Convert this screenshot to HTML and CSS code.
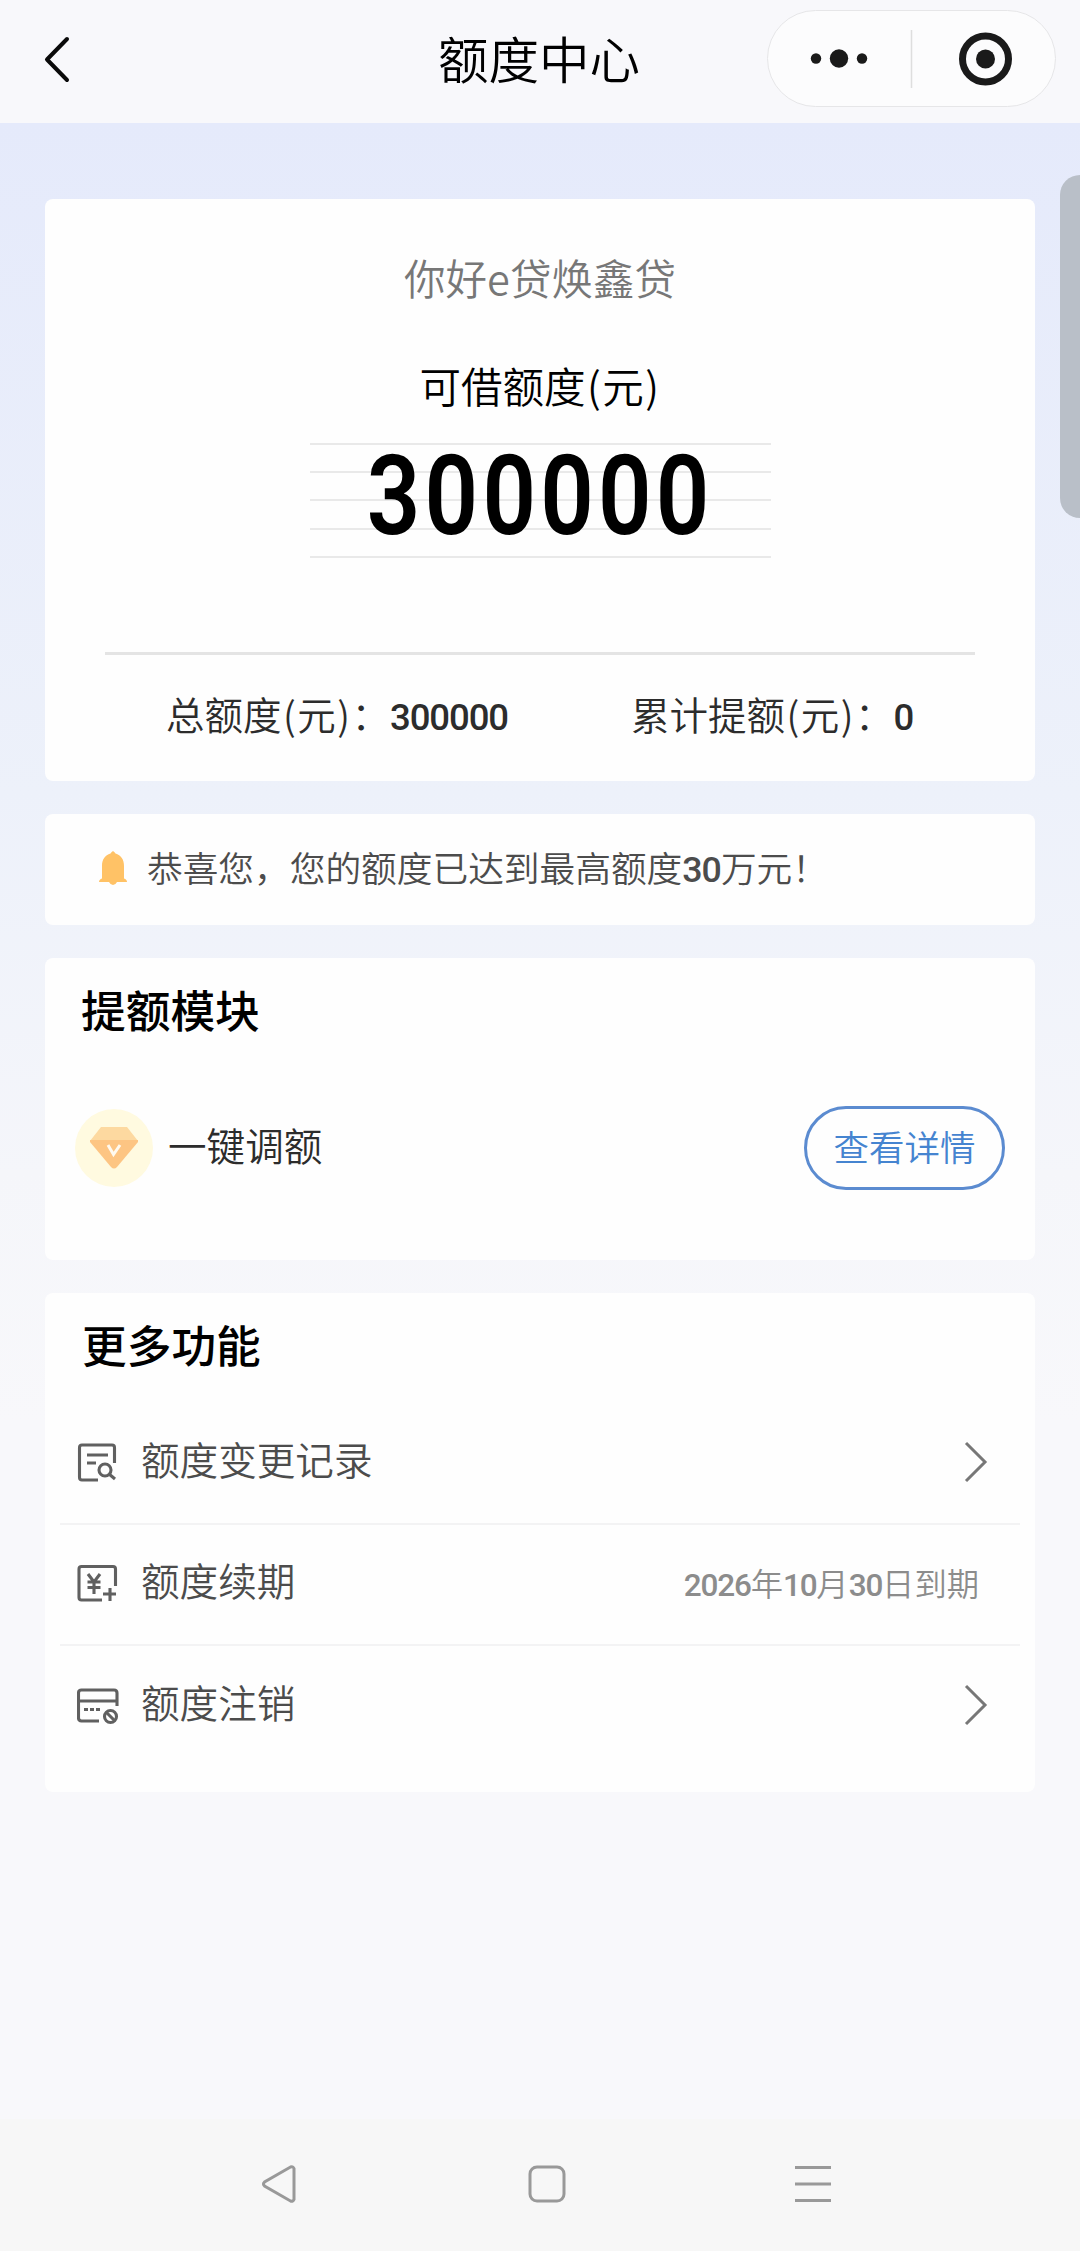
FILE: index.html
```html
<!DOCTYPE html>
<html lang="zh-CN">
<head>
<meta charset="utf-8">
<title>额度中心</title>
<link rel="stylesheet" href="styles.css">
</head>
<body>
<header class="topbar">
  <svg class="back" width="30" height="50" viewBox="0 0 30 50" fill="none" stroke="#0a0a0a" stroke-width="4" stroke-linecap="round" stroke-linejoin="round"><path d="M25 5 5 25.500 25 46"/></svg>
  <h1 class="title">额度中心</h1>
  <div class="capsule">
    <svg width="287" height="95" viewBox="0 0 287 95" fill="#1a1a1a"><circle cx="48" cy="47.500" r="5.200"/><circle cx="71" cy="47.500" r="9.200"/><circle cx="94" cy="47.500" r="5.200"/><path d="M143.500 19v58" stroke="#dedede" stroke-width="1.500"/><circle cx="217.500" cy="48" r="23" fill="none" stroke="#1a1a1a" stroke-width="7"/><circle cx="217.500" cy="48" r="9.500"/></svg>
  </div>
</header>
<main class="content">
  <section class="card quota">
    <p class="product">你好e贷焕鑫贷</p>
    <p class="label">可借额度<span class="paren">(</span>元<span class="paren">)</span></p>
    <div class="amount"><span class="amount-value">300000</span></div>
    <div class="totals">
      <p>总额度<span class="paren">(</span>元<span class="paren">)</span>：<span class="num">300000</span></p>
      <p>累计提额<span class="paren">(</span>元<span class="paren">)</span>：<span class="num">0</span></p>
    </div>
  </section>
  <section class="card notice">
    <svg width="28" height="36" viewBox="0 0 28 36" fill="#ffc266"><path d="M14 0q1.800 1 2.500 2.600C22 4.500 25 8.500 25 15v12.500q3 1 3 3.500H18q-1.500 3-4 3t-4-3H0q0-2.500 3-3.500V15C3 8.500 6 4.500 11.500 2.600Q12.200 1 14 0z"/></svg>
    <p>恭喜您，您的额度已达到最高额度<span class="num">30</span>万元！</p>
  </section>
  <section class="card raise">
    <h2>提额模块</h2>
    <div class="raise-row">
      <svg class="gem" width="80" height="80" viewBox="0 0 80 80"><circle cx="40" cy="40" r="39" fill="#fffae0"/><path d="M27 19h26l11 14H16z" fill="#fdd9a0"/><path d="M16 32h48v2L43 59q-3 3-6 0L16 34z" fill="#fdc583"/><path d="M34 37l5.500 9.500L46 37" fill="none" stroke="#fffaf0" stroke-width="3"/></svg>
      <span class="raise-name">一键调额</span>
      <button class="detail">查看详情</button>
    </div>
  </section>
  <section class="card more">
    <h2>更多功能</h2>
    <ul class="menu">
      <li>
        <svg class="icon" width="42" height="42" viewBox="0 0 42 42"><path d="M21 39H5q-2.500 0-2.500-2.500v-30Q2.500 4 5 4h30q2.500 0 2.500 2.500V22M10 14h21M10 22h9"/><circle cx="28" cy="29" r="6"/><path d="M32 33l6 5"/></svg>
        <span class="name">额度变更记录</span>
        <svg class="chevron" width="24" height="42" viewBox="0 0 24 42"><path d="M2 2l19 19L2 40"/></svg>
      </li>
      <li>
        <svg class="icon" width="42" height="42" viewBox="0 0 42 42"><path d="M25 38H4.500Q2 38 2 35.500V7q0-2.500 2.500-2.500H36q2.500 0 2.500 2.500v17M11 12l6 8 6-8M17 20v12M10.500 20h13M10.500 25.500h13M33 26v13M26 32h13"/></svg>
        <span class="name">额度续期</span>
        <span class="date"><span class="num">2026</span>年<span class="num">10</span>月<span class="num">30</span>日到期</span>
      </li>
      <li>
        <svg class="icon" width="42" height="42" viewBox="0 0 42 42"><path d="M22 37H4.500Q1.500 37 1.500 34V9q0-3 3-3H37q3 0 3 3v13M1.500 17H40"/><path d="M7 25.500h4M13 25.500h4M19 25.500h4"/><circle cx="33.500" cy="32.500" r="6"/><path d="M29.500 28.500l8 8"/></svg>
        <span class="name">额度注销</span>
        <svg class="chevron" width="24" height="42" viewBox="0 0 24 42"><path d="M2 2l19 19L2 40"/></svg>
      </li>
    </ul>
  </section>
</main>
<nav class="sysnav">
  <svg width="38" height="40" viewBox="0 0 38 40"><path d="M33 4.500v31q-1 2.500-3.500 1.500L3.500 22q-2-2 0-4l26-15q2.500-1 3.500 1.500z"/></svg>
  <svg width="38" height="40" viewBox="0 0 38 40"><rect x="2" y="3" width="34" height="34" rx="7"/></svg>
  <svg width="38" height="40" viewBox="0 0 38 40"><path d="M1 3.500h36M1 20h36M1 36.500h36"/></svg>
</nav>
<div class="edge-handle"></div>
</body>
</html>
```
FILE: styles.css
```css
* { box-sizing: border-box; margin: 0; padding: 0; }

body {
  position: relative;
  width: 1080px;
  height: 2251px;
  display: flex;
  flex-direction: column;
  overflow: hidden;
  background: #f7f8fb;
  font-family: "Noto Sans CJK SC", sans-serif;
  font-weight: 350;
  color: #2c2c2c;
}

svg { display: block; flex: none; }

.topbar {
  height: 123px;
  display: grid;
  grid-template-columns: 1fr auto 1fr;
  align-items: center;
  padding: 0 24px 6px 42px;
  background: #f8f8fb;
}
.title {
  font-size: 50.5px;
  font-weight: 350;
  line-height: 60px;
  color: #000;
  padding: 0 20px 3px 0;
}
.capsule {
  justify-self: end;
  width: 289px;
  height: 97px;
  border: 1px solid #e6e6e8;
  border-radius: 49px;
  background: #fcfcfd;
}

.content {
  flex: 1;
  display: flex;
  flex-direction: column;
  gap: 33px;
  padding: 76px 45px 0;
  background: linear-gradient(#e5eafb 0, #edf1fa 670px, #f5f6fa 1050px, #f8f8fb 1300px);
}
.card { background: #fefefe; border-radius: 8px; }

.num {
  font-family: Roboto, "Noto Sans CJK SC", sans-serif;
  font-weight: 500;
  letter-spacing: -1px;
}
.paren { padding: 0 1.5px; }

.quota {
  height: 582px;
  display: flex;
  flex-direction: column;
  align-items: center;
  padding-top: 53px;
}
.product { font-size: 41.500px; line-height: 50px; color: #777; }
.label { margin-top: 58px; font-size: 41.500px; line-height: 50px; color: #000; }
.amount {
  width: 461px;
  height: 115px;
  margin-top: 33px;
  display: flex;
  justify-content: center;
  background:
    linear-gradient(#e9e9e9, #e9e9e9) 0 0 / 100% 2px no-repeat,
    linear-gradient(#e9e9e9, #e9e9e9) 0 28px / 100% 2px no-repeat,
    linear-gradient(#e9e9e9, #e9e9e9) 0 56px / 100% 2px no-repeat,
    linear-gradient(#e9e9e9, #e9e9e9) 0 85px / 100% 2px no-repeat,
    linear-gradient(#e9e9e9, #e9e9e9) 0 113px / 100% 2px no-repeat;
}
.amount-value {
  font-family: Roboto, sans-serif;
  font-weight: 600;
  font-size: 111px;
  line-height: 107px;
  letter-spacing: 5px;
  color: #000;
  transform: scaleX(0.845);
}
.totals {
  width: 870px;
  margin-top: 94px;
  padding: 35px 0 0 61px;
  border-top: 3px solid #e4e4e4;
  display: flex;
  gap: 123px;
  font-size: 38.500px;
  line-height: 46px;
  white-space: nowrap;
}
.totals .num { font-size: 36.500px; letter-spacing: -1.1px; }

.notice {
  height: 111px;
  display: flex;
  align-items: center;
  gap: 20px;
  padding: 0 54px 1px;
  font-size: 35.700px;
  line-height: 44px;
  color: #4c4c4c;
}
.notice p { padding-bottom: 2px; }

h2 { font-size: 44.700px; font-weight: 500; line-height: 56px; color: #000; }
.raise { height: 302px; padding: 23px 30px 0 36px; }
.raise-row { display: flex; align-items: center; margin-top: 69px; margin-left: -7px; }
.raise-name { margin-left: 14px; padding-bottom: 8px; font-size: 38.600px; line-height: 46px; }
.detail {
  margin-left: auto;
  width: 201px;
  height: 84px;
  padding-bottom: 5px;
  border: 3px solid #5b8bd0;
  border-radius: 42px;
  background: #fefefe;
  color: #4584d0;
  font: 350 35.500px/44px "Noto Sans CJK SC", sans-serif;
}

.more { height: 499px; padding: 23px 15px 0; }
.more h2 { padding-left: 22px; }
.menu { list-style: none; margin-top: 32px; }
.menu li {
  height: 121px;
  display: flex;
  align-items: center;
  padding: 0 32px 4px 17px;
  border-bottom: 2px solid #f3f3f4;
}
.menu li:last-child { border-bottom: 0; }
.icon { fill: none; stroke: #606060; stroke-width: 3.100; }
.name { margin-left: 22px; padding-bottom: 7px; font-size: 38.600px; line-height: 46px; color: #4c4c4c; }
.chevron { margin-left: auto; fill: none; stroke: #777; stroke-width: 3; }
.date { margin: 0 9px 0 auto; padding-top: 2px; font-size: 32.300px; line-height: 40px; color: #8c8c8c; }
.date .num { letter-spacing: -1.2px; font-size: 31.500px; }

.sysnav {
  height: 132px;
  display: flex;
  justify-content: space-between;
  padding: 45px 248px 0 261px;
  background: #f7f7f7;
}
.sysnav svg { fill: none; stroke: #999; stroke-width: 3; }

.edge-handle {
  position: absolute;
  top: 175px;
  right: 0;
  width: 20px;
  height: 343px;
  border-radius: 20px 0 0 20px;
  background: #b9bfc8;
}
```
